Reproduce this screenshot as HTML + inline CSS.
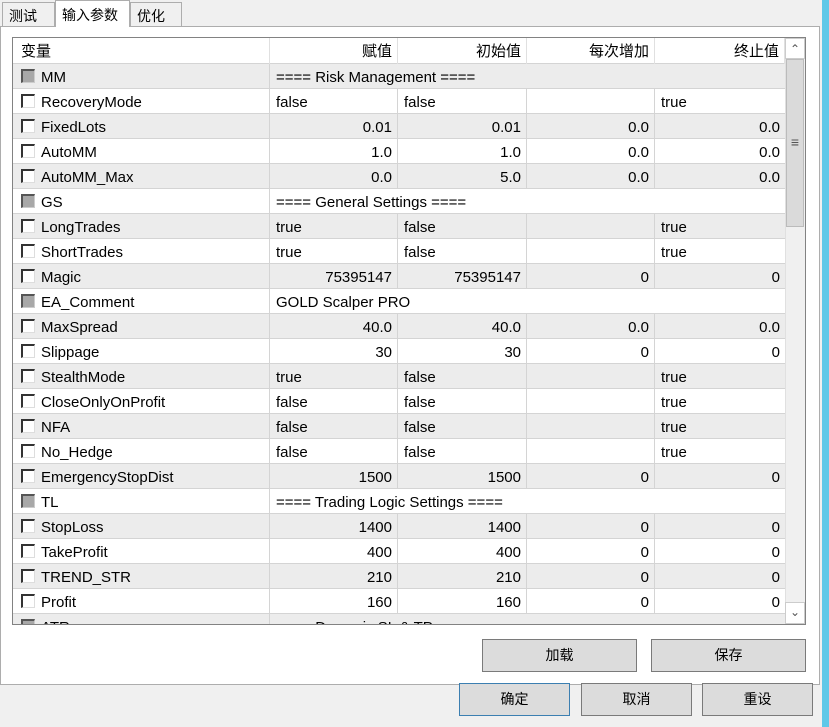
<!DOCTYPE html>
<html><head><meta charset="utf-8"><style>
*{margin:0;padding:0;box-sizing:border-box}
body{width:829px;height:727px;background:#f0f0f0;position:relative;overflow:hidden;font-family:"Liberation Sans","Noto Sans CJK SC",sans-serif;font-size:15px;color:#000}
.abs{position:absolute}
.tab{position:absolute;top:2px;height:24px;border:1px solid #adadad;border-bottom:none;background:#f0f0f0;font-size:14px;padding:3px 0 0 6px}
.panel{position:absolute;left:0;top:26px;width:820px;height:659px;background:#fff;border:1px solid #adadad}
.tbl{position:absolute;left:12px;top:37px;width:794px;height:588px;border:1px solid #828282;background:#fff;overflow:hidden}
.row{position:absolute;left:0;width:772px;height:25px;border-bottom:1px solid #d4d4d4}
.row.g{background:#ececec}
.c{position:absolute;top:0;height:25px;line-height:27px;border-right:1px solid #d4d4d4;white-space:nowrap;overflow:hidden}
.c1{left:0;width:257px;padding-left:28px}
.c2{left:257px;width:128px}.c3{left:385px;width:129px}.c4{left:514px;width:128px}.c5{left:642px;width:130px;border-right:none}
.r{text-align:right;padding-right:5px}.l{padding-left:6px}
.cb{position:absolute;left:8px;top:5px;width:14px;height:14px;border:2px solid #333;border-right:1px solid #ddd;border-bottom:1px solid #ddd;background:#fff}
.cb.d{background:#a8a8a8;border-color:#555 #ccc #ccc #555}
.hdr{position:absolute;left:0;top:0;width:772px;height:26px;background:#fff;border-bottom:1px solid #d4d4d4}
.hdr .c{height:26px;line-height:27px;border-right:1px solid #e0e0e0}
.btn{position:absolute;background:#dcdcdc;border:1px solid #7a7a7a;text-align:center;font-size:14px;line-height:33px}
</style></head><body>
<div class="abs" style="left:822px;top:0;width:7px;height:727px;background:#5fc8e8"></div>
<div class="panel"></div>
<div class="tab" style="left:2px;width:53px">测试</div>
<div class="tab" style="left:55px;top:0;height:27px;width:75px;background:#fff;padding-top:4px">输入参数</div>
<div class="tab" style="left:130px;width:52px">优化</div>
<div class="tbl">
<div class="hdr"><div class="c c1" style="padding-left:8px">变量</div><div class="c c2 r">赋值</div><div class="c c3 r">初始值</div><div class="c c4 r">每次增加</div><div class="c c5 r">终止值</div></div>
<div id="rows"></div>
<div class="abs" style="left:772px;top:0;width:20px;height:586px;background:#f0f0f0;border-left:1px solid #e0e0e0"></div>
<div class="abs" style="left:772px;top:0;width:20px;height:21px;background:#fff;border:1px solid #ccc;text-align:center;font-size:12px;line-height:20px;color:#555">&#8963;</div>
<div class="abs" style="left:773px;top:21px;width:18px;height:168px;background:#dadada;border:1px solid #bbb;text-align:center;line-height:164px;color:#555;font-size:14px">≡</div>
<div class="abs" style="left:772px;top:564px;width:20px;height:22px;background:#fff;border:1px solid #ccc;text-align:center;font-size:12px;line-height:18px;color:#555">&#8964;</div>
</div>
<div class="btn" style="left:482px;top:639px;width:155px;height:33px;line-height:31px">加载</div>
<div class="btn" style="left:651px;top:639px;width:155px;height:33px;line-height:31px">保存</div>
<div class="btn" style="left:459px;top:683px;width:111px;height:33px;line-height:31px;border-color:#3c7fb1">确定</div>
<div class="btn" style="left:581px;top:683px;width:111px;height:33px;line-height:31px">取消</div>
<div class="btn" style="left:702px;top:683px;width:111px;height:33px;line-height:31px">重设</div>
<script>
var d=[["MM","==== Risk Management ===="],["RecoveryMode","false","false","","true"],["FixedLots","0.01","0.01","0.0","0.0",1],["AutoMM","1.0","1.0","0.0","0.0",1],["AutoMM_Max","0.0","5.0","0.0","0.0",1],["GS","==== General Settings ===="],["LongTrades","true","false","","true"],["ShortTrades","true","false","","true"],["Magic","75395147","75395147","0","0",1],["EA_Comment","GOLD Scalper PRO"],["MaxSpread","40.0","40.0","0.0","0.0",1],["Slippage","30","30","0","0",1],["StealthMode","true","false","","true"],["CloseOnlyOnProfit","false","false","","true"],["NFA","false","false","","true"],["No_Hedge","false","false","","true"],["EmergencyStopDist","1500","1500","0","0",1],["TL","==== Trading Logic Settings ===="],["StopLoss","1400","1400","0","0",1],["TakeProfit","400","400","0","0",1],["TREND_STR","210","210","0","0",1],["Profit","160","160","0","0",1],["ATR","==== Dynamic SL & TP ===="]];
var h="";d.forEach(function(r,i){var top=26+i*25;h+='<div class="row'+(i%2==0?' g':'')+'" style="top:'+top+'px"><div class="c c1"><span class="cb'+(r.length==2?' d':'')+'"></span>'+r[0]+'</div>';
if(r.length==2){h+='<div class="c l" style="left:257px;width:515px;border-right:none">'+r[1]+'</div>';}
else{var a=r[5]?' r':' l';for(var k=1;k<5;k++)h+='<div class="c c'+(k+1)+a+'">'+r[k]+'</div>';}
h+='</div>';});document.getElementById('rows').innerHTML=h;
</script>
</body></html>
